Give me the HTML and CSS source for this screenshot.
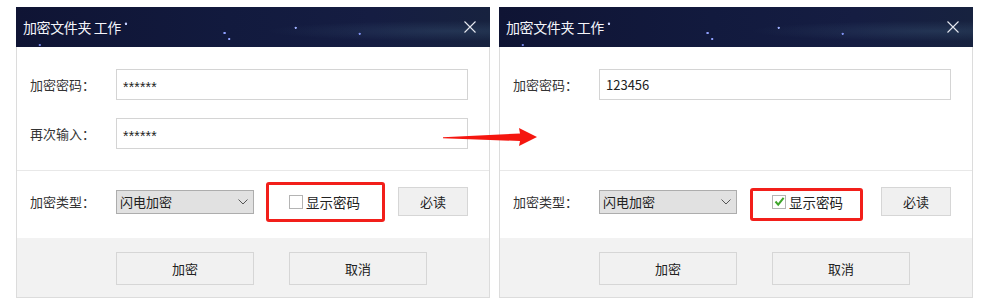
FILE: index.html
```html
<!DOCTYPE html>
<html lang="zh">
<head>
<meta charset="utf-8">
<link rel="stylesheet" href="styles.css">
</head>
<body>
<div class="page">
  <div class="dialog">
    <div class="titlebar">
      <span class="title">加密文件夹 工作</span>
      <svg class="close" width="12" height="12" viewBox="0 0 12 12"><path d="M0.5 0.5L11.5 11.5M11.5 0.5L0.5 11.5" stroke="#e6e8f0" stroke-width="1.1" fill="none"/></svg>
    </div>
    <div class="body">
      <div class="pw-section">
        <div class="row"><span class="label">加密密码：</span><div class="input stars">******</div></div>
        <div class="row"><span class="label">再次输入：</span><div class="input stars">******</div></div>
      </div>
      <div class="type-row">
        <span class="label">加密类型：</span>
        <div class="select"><span>闪电加密</span><svg width="10" height="6" viewBox="0 0 10 6"><path d="M0.5 0.5L5 5L9.5 0.5" stroke="#555" stroke-width="1" fill="none"/></svg></div>
        <div class="check"><span class="box"></span><span>显示密码</span></div>
        <div class="btn small">必读</div>
      </div>
      <div class="footer">
        <div class="btn">加密</div>
        <div class="btn">取消</div>
      </div>
    </div>
  </div>
  <div class="dialog">
    <div class="titlebar">
      <span class="title">加密文件夹 工作</span>
      <svg class="close" width="12" height="12" viewBox="0 0 12 12"><path d="M0.5 0.5L11.5 11.5M11.5 0.5L0.5 11.5" stroke="#e6e8f0" stroke-width="1.1" fill="none"/></svg>
    </div>
    <div class="body">
      <div class="pw-section">
        <div class="row"><span class="label">加密密码：</span><div class="input">123456</div></div>
      </div>
      <div class="type-row">
        <span class="label">加密类型：</span>
        <div class="select"><span>闪电加密</span><svg width="10" height="6" viewBox="0 0 10 6"><path d="M0.5 0.5L5 5L9.5 0.5" stroke="#555" stroke-width="1" fill="none"/></svg></div>
        <div class="check"><span class="box"><svg width="11" height="11" viewBox="0 0 11 11"><path d="M1.5 5.5L4.2 8.6L9.6 1.8" stroke="#3ea52b" stroke-width="2" fill="none"/></svg></span><span>显示密码</span></div>
        <div class="btn small">必读</div>
      </div>
      <div class="footer">
        <div class="btn">加密</div>
        <div class="btn">取消</div>
      </div>
    </div>
  </div>
  <div class="mark mark-left"></div>
  <div class="mark mark-right"></div>
  <svg class="arrow" width="100" height="22" viewBox="0 0 100 22"><polygon points="0,9.2 77,5.5 76,0 94,9 76,18 77,13 0,10.2" fill="#f5160f"/></svg>
</div>
</body>
</html>
```
FILE: styles.css
```css
* { box-sizing: border-box; }
html, body { margin: 0; background: #fff; }
body {
  font-family: "Noto Sans CJK SC", "Noto Sans", sans-serif;
  font-size: 13px;
  color: #222;
}
.page {
  position: relative;
  display: flex;
  gap: 9px;
  padding: 7px 0 0 16px;
  width: 988px;
  height: 298px;
}
.dialog {
  width: 474px;
  display: flex;
  flex-direction: column;
}
.titlebar {
  height: 40px;
  display: flex;
  align-items: center;
  justify-content: space-between;
  padding: 0 14px 0 7px;
  background:
    radial-gradient(circle at 23.2% 42%, #c0ccff 0, #c0ccff 1px, transparent 1.6px),
    radial-gradient(circle at 44% 65%, #8fa0ff 0, #8fa0ff 0.9px, transparent 1.5px),
    radial-gradient(circle at 45% 80%, #8fa0ff 0, #8fa0ff 0.8px, transparent 1.4px),
    radial-gradient(circle at 59% 52%, #9fb0ff 0, #9fb0ff 0.8px, transparent 1.4px),
    radial-gradient(circle at 72.5% 67%, #7f90f0 0, #7f90f0 0.8px, transparent 1.4px),
    radial-gradient(circle at 5% 95%, #6f80e0 0, #6f80e0 0.8px, transparent 1.4px),
    radial-gradient(ellipse at 92% 60%, rgba(60,90,120,0.35), transparent 30%),
    linear-gradient(90deg, #0f1434 0%, #121a3e 45%, #151d42 75%, #17223f 100%);
}
.title {
  color: #f4f5fa;
  font-size: 14px;
  letter-spacing: -0.4px;
}
.close { display: block; }
.body {
  flex: 1;
  border: 1px solid #dcdcdc;
  border-top: none;
  display: flex;
  flex-direction: column;
}
.pw-section {
  height: 124px;
  padding: 22px 0 0 13px;
  border-bottom: 1px solid #e8e8e8;
  display: flex;
  flex-direction: column;
  gap: 18px;
}
.row {
  display: flex;
  align-items: center;
  height: 31px;
}
.label {
  width: 86px;
  flex: none;
  color: #333;
}
.input {
  width: 352px;
  height: 31px;
  border: 1px solid #d4d4d4;
  background: #fff;
  padding: 0 0 0 6px;
  display: flex;
  align-items: center;
  font-size: 13px;
  color: #222;
}
.input.stars {
  font-family: "Liberation Sans", sans-serif;
  font-size: 14px;
  letter-spacing: 0.2px;
  padding-top: 4px;
}
.type-row {
  height: 67px;
  padding: 0 0 6px 13px;
  display: flex;
  align-items: center;
}
.select {
  width: 138px;
  height: 24px;
  background: #e1e1e1;
  border: 1px solid #adadad;
  display: flex;
  align-items: center;
  justify-content: space-between;
  padding: 0 5px 0 3px;
  color: #222;
}
.select svg { display: block; }
.check {
  width: 109px;
  margin-left: 35px;
  display: flex;
  align-items: center;
  gap: 3px;
  color: #222;
  font-size: 13.5px;
}
.box {
  width: 14px;
  height: 14px;
  border: 1px solid #b4b4b4;
  background: #fff;
  display: flex;
  align-items: center;
  justify-content: center;
}
.box svg { display: block; }
.btn {
  width: 138px;
  height: 33px;
  border: 1px solid #d6d6d6;
  background: #f1f1f1;
  display: flex;
  align-items: center;
  justify-content: center;
  color: #222;
}
.btn.small {
  width: 70px;
  height: 29px;
  background: #f0f0f0;
}
.footer {
  flex: 1;
  background: #f2f2f2;
  display: flex;
  gap: 35px;
  padding: 14px 0 0 99px;
}
.mark {
  position: absolute;
  border: 3px solid #f21f1a;
  border-radius: 3px;
}
.mark-left { left: 266px; top: 182px; width: 119px; height: 40px; }
.mark-right { left: 750px; top: 188px; width: 113px; height: 33px; }
.arrow {
  position: absolute;
  left: 443px;
  top: 128px;
}
```
